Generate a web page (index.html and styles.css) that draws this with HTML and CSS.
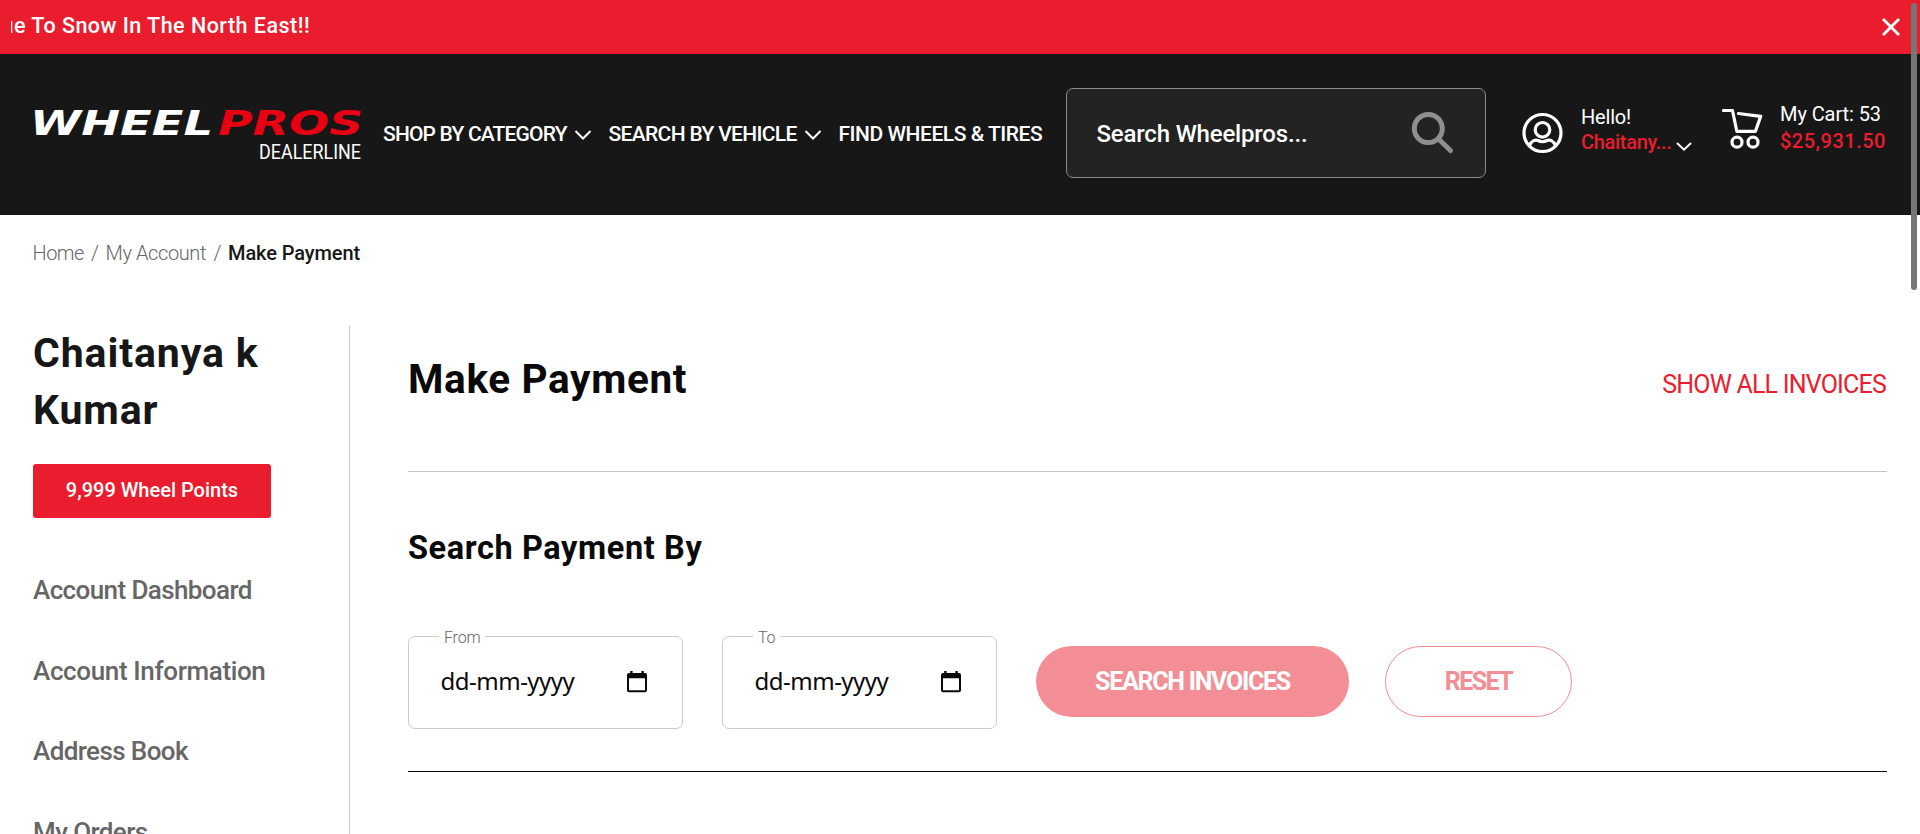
FILE: index.html
```
<!DOCTYPE html>
<html lang="en">
<head>
<meta charset="utf-8">
<title>Make Payment</title>
<link rel="stylesheet" href="styles.css">
</head>
<body>
<div class="announce">
  <div class="announce-text">ue To Snow In The North East!!</div>
  <svg class="close" width="20" height="20" viewBox="0 0 20 20"><path d="M2 2 18 18M18 2 2 18"/></svg>
</div>
<header class="header">
  <svg class="logo" width="330" height="60" viewBox="0 0 330 60">
    <text class="logo-word" x="-3" y="29" textLength="183" lengthAdjust="spacingAndGlyphs" fill="#fff">WHEEL</text>
    <text class="logo-word" x="185" y="29" textLength="145" lengthAdjust="spacingAndGlyphs" fill="#e60012">PROS</text>
    <text class="logo-sub" x="226" y="53" textLength="102" lengthAdjust="spacingAndGlyphs" fill="#fff">DEALERLINE</text>
  </svg>
  <nav class="nav">
    <a class="nav-item nav-shop">SHOP BY CATEGORY <svg width="18" height="12" viewBox="0 0 18 12"><path d="M1.5 2 9 9.5 16.5 2"/></svg></a>
    <a class="nav-item nav-vehicle">SEARCH BY VEHICLE <svg width="18" height="12" viewBox="0 0 18 12"><path d="M1.5 2 9 9.5 16.5 2"/></svg></a>
    <a class="nav-item nav-find">FIND WHEELS &amp; TIRES</a>
  </nav>
  <div class="search">
    <span>Search Wheelpros...</span>
    <svg width="44" height="44" viewBox="0 0 44 44"><circle cx="17.3" cy="17.5" r="14" /><path d="M27.5 28 39.5 39.5"/></svg>
  </div>
  <svg class="user-icon" width="42" height="44" viewBox="0 0 42 44"><circle cx="20.5" cy="21" r="18.5"/><circle cx="20.5" cy="17.8" r="7.3"/><path d="M7.5 33.5C9.5 29 13 27.5 16 28.5Q20.5 31 25 28.5C28 27.5 31.5 29 33.5 33.5"/></svg>
  <div class="user">
    <div>Hello!</div>
    <div class="user-name">Chaitany...<svg width="18" height="12" viewBox="0 0 18 12"><path d="M2 3 9 9.7 16 3"/></svg></div>
  </div>
  <svg class="cart-icon" width="42" height="42" viewBox="0 0 42 42"><path d="M1.5 2.5H10.5L14.8 23.3H33.5L38.7 8.3 16.5 5.5"/><circle cx="15" cy="34.2" r="5"/><circle cx="31" cy="34.2" r="5"/></svg>
  <div class="cart">
    <div>My Cart: 53</div>
    <div class="cart-total">$25,931.50</div>
  </div>
</header>
<div class="crumbs"><span class="c1">Home</span><span class="c2">/</span><span class="c3">My Account</span><span class="c2">/</span><b>Make Payment</b></div>
<div class="page">
  <aside class="side">
    <h2 class="name">Chaitanya k<br>Kumar</h2>
    <div class="points">9,999 Wheel Points</div>
    <ul class="menu">
      <li>Account Dashboard</li>
      <li class="info">Account Information</li>
      <li>Address Book</li>
      <li>My Orders</li>
    </ul>
  </aside>
  <main class="main">
    <div class="head">
      <h1>Make Payment</h1>
      <a>SHOW ALL INVOICES</a>
    </div>
    <h3 class="sub">Search Payment By</h3>
    <div class="form">
      <div class="field"><label>From</label><span>dd-mm-yyyy</span><svg width="22" height="24" viewBox="0 0 22 24"><path d="M4.2 1h2.4v2h8.8V1h2.4v2H19q2 0 2 2V20.3q0 2-2 2H3q-2 0-2-2V5q0-2 2-2h1.200zM3 8.200V20.300H19V8.200z" fill-rule="evenodd"/></svg></div>
      <div class="field"><label>To</label><span>dd-mm-yyyy</span><svg width="22" height="24" viewBox="0 0 22 24"><path d="M4.2 1h2.4v2h8.8V1h2.4v2H19q2 0 2 2V20.3q0 2-2 2H3q-2 0-2-2V5q0-2 2-2h1.200zM3 8.200V20.300H19V8.200z" fill-rule="evenodd"/></svg></div>
      <div class="btn btn-fill">SEARCH INVOICES</div>
      <div class="btn btn-line">RESET</div>
    </div>
  </main>
</div>
<div class="scrollbar"></div>
</body>
</html>
```
FILE: styles.css
```
* { box-sizing: border-box; }
body { margin: 0; height: 834px; overflow: hidden; background: #fff; color: #0a0a0a; font-family: Roboto, "Liberation Sans", sans-serif; white-space: nowrap; }
svg { flex: none; fill: none; }

.announce { height: 54px; background: #ea1d2e; color: #fff; display: flex; justify-content: space-between; padding: 0 19px 0 10.5px; }
.announce-text { overflow: hidden; text-indent: -9px; font-size: 21.5px; font-weight: 500; line-height: 51px; letter-spacing: .48px; }
.close { margin-top: 17px; stroke: #fff; stroke-width: 2.8; }

.header { height: 161px; background: #171717; color: #fff; display: flex; align-items: flex-start; padding-left: 33px; }
.logo { margin-top: 52px; overflow: visible; }
.logo-word { font: italic bold 34px "DejaVu Sans", sans-serif; }
.logo-sub { font: 400 20px Roboto, sans-serif; }
.nav { display: grid; grid-template-columns: 225.5px 230px 227.5px; margin-left: 20px; font-size: 21px; font-weight: 500; line-height: 161px; }
.nav-item { display: flex; justify-content: space-between; align-items: center; padding-right: 17px; }
.nav svg, .user svg { stroke: #fff; stroke-width: 2; }
.nav-shop { letter-spacing: -.82px; }
.nav-vehicle { letter-spacing: -.66px; }
.nav-find { letter-spacing: -.46px; }
.search { width: 420px; height: 90px; margin-top: 34px; border: 1px solid #8a8a8a; border-radius: 7px; background: #232323; display: flex; justify-content: space-between; align-items: center; padding: 0 30px 0 29.5px; font-size: 24px; font-weight: 500; letter-spacing: -.18px; }
.search span { padding-top: 2px; }
.search svg { stroke: #8f8f8f; stroke-width: 5; stroke-linecap: round; }
.user-icon { margin: 58px 0 0 36px; stroke: #fff; stroke-width: 3.2; }
.user { width: 140.500px; margin: 51px 0 0 17px; font-size: 20px; line-height: 25px; letter-spacing: -.2px; }
.user-name { color: #ea1d2e; font-weight: 500; display: flex; align-items: center; letter-spacing: -.3px; }
.user-name svg { margin: 7px 0 0 3.5px; }
.cart-icon { margin-top: 53.5px; stroke: #fff; stroke-width: 3.2; stroke-linejoin: round; stroke-linecap: round; }
.cart { margin: 47px 0 0 16.5px; font-size: 20px; line-height: 27px; letter-spacing: -.08px; }
.cart-total { color: #ea1d2e; font-weight: 500; letter-spacing: .5px; }

.crumbs { display: flex; margin-top: 18px; padding-left: 32.5px; font-size: 20px; line-height: 40px; font-weight: 300; color: #666; }
.c1 { width: 58.5px; letter-spacing: -.5px; }
.c2 { width: 14.500px; }
.c3 { width: 108px; letter-spacing: -.4px; }
.crumbs b { font-weight: 500; color: #171717; letter-spacing: -.1px; }

.page { display: flex; margin-top: 53px; height: 508px; }
.side { width: 350px; padding-left: 33px; border-right: 1px solid #c7c7c7; }
.name { margin: -1px 0 0; font-size: 41px; line-height: 56.5px; font-weight: 700; color: #171717; letter-spacing: .9px; }
.points { width: 238px; height: 54px; margin-top: 25.5px; border-radius: 3px; background: #ea1d2e; color: #fff; text-align: center; font-size: 20px; font-weight: 500; line-height: 53px; }
.menu { list-style: none; margin: 32.500px 0 0; padding: 0; color: #666; font-size: 26px; font-weight: 500; line-height: 80.5px; letter-spacing: -.6px; }
.info { letter-spacing: -.36px; }

.main { width: 1479px; margin-left: 58px; }
.head { height: 146px; border-bottom: 1px solid #c7c9c9; display: flex; justify-content: space-between; align-items: flex-start; }
.head h1 { margin: 23px 0 0; font-size: 40.5px; line-height: 60px; font-weight: 700; letter-spacing: .65px; }
.head a { margin: 29px 1px 0 0; color: #ea1d2e; font-size: 25px; line-height: 60px; letter-spacing: -.8px; }
.sub { margin: 51px 0 63px; font-size: 32.5px; line-height: 50px; font-weight: 700; letter-spacing: .6px; }
.form { height: 136px; border-bottom: 1px solid #0b0b0b; display: flex; align-items: flex-start; }
.field { position: relative; width: 275px; height: 93px; margin-right: 39px; border: 1px solid #ccc; border-radius: 7px; display: flex; align-items: center; justify-content: space-between; padding: 0 34px 2px 31.5px; font-family: "Noto Sans", sans-serif; font-size: 24px; letter-spacing: -.5px; }
.field span { padding-bottom: 2px; }
.field svg { fill: #0a0a0a; }
.field label { position: absolute; left: 30px; top: -11px; padding: 0 5px; background: #fff; color: #666; font: 300 16px/24px Roboto, sans-serif; letter-spacing: -.2px; }
.btn { height: 71px; margin-top: 10px; border-radius: 35.5px; text-align: center; font-size: 25px; font-weight: 700; line-height: 71px; }
.btn-fill { width: 313px; background: #f48e96; color: #fff; letter-spacing: -1.27px; }
.btn-line { width: 187px; margin-left: 36px; border: 1px solid #f48e96; color: #f48e96; line-height: 69px; letter-spacing: -1.6px; }

.scrollbar { position: absolute; left: 1911px; top: 3px; width: 6px; height: 287px; border-radius: 3px; background: #767676; }
```
